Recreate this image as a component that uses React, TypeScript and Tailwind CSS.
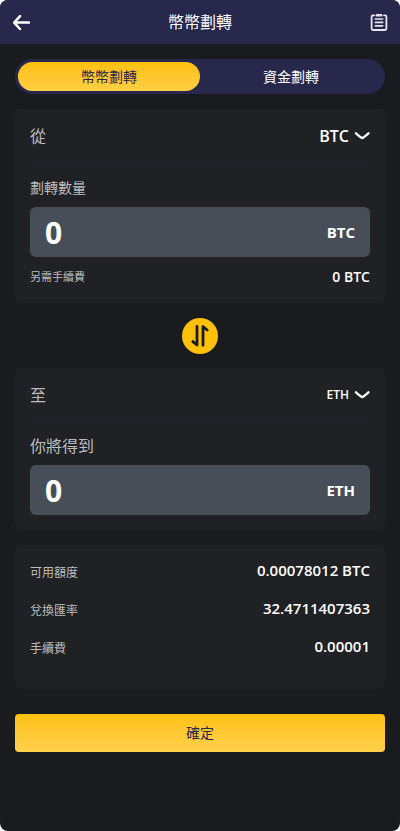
import React, { useState } from "react";

const coins = ["BTC", "ETH"];

const summary = [
  { label: "可用額度", value: "0.00078012 BTC" },
  { label: "兌換匯率", value: "32.4711407363" },
  { label: "手續費", value: "0.00001" },
];

function Header() {
  return (
    <header className="flex h-11 items-center justify-between bg-[#28274c] px-3 text-white">
      <a href="#back" aria-label="返回" className="flex w-5 justify-start">
        <svg viewBox="0 0 18 18" className="h-[18px] w-[18px]" fill="none" stroke="currentColor" strokeWidth="2.5" strokeLinecap="round" strokeLinejoin="round">
          <path d="M17 9.6H2.4M8 3.2L2.2 9.6L8 16" />
        </svg>
      </a>
      <h1 className="text-base leading-6">幣幣劃轉</h1>
      <a href="#records" aria-label="劃轉記錄" className="flex w-5 justify-end">
        <svg viewBox="0 0 18 18" className="h-[18px] w-[18px]" fill="none" stroke="#e6e6ee" strokeWidth="1.8" strokeLinecap="round" strokeLinejoin="round">
          <path d="M4 2.4H2.8Q1.6 2.4 1.6 3.8V15.5Q1.6 17 3 17H15Q16.4 17 16.4 15.5V3.8Q16.4 2.4 15.2 2.4H14" />
          <path d="M6.8 2.2H11.2" strokeWidth="2.4" />
          <path d="M5.4 6H12.6M5.4 9.4H12.6M5.4 12.8H12.6" strokeWidth="1.7" />
        </svg>
      </a>
    </header>
  );
}

function Tabs() {
  return (
    <nav className="flex rounded-full bg-[#28274c] p-[3px] text-sm leading-5">
      <button className="h-[29px] flex-1 rounded-full bg-linear-to-b from-[#ffc10a] to-[#ffce41] text-[#28274c]">
        幣幣劃轉
      </button>
      <button className="h-[29px] flex-1 rounded-full text-white">資金劃轉</button>
    </nav>
  );
}

type CoinSelectProps = {
  id: string;
  value: string;
  onChange: (coin: string) => void;
  className: string;
};

function CoinSelect({ id, value, onChange, className }: CoinSelectProps) {
  return (
    <div className="relative flex items-center">
      <select
        id={id}
        value={value}
        onChange={(e) => onChange(e.target.value)}
        className={`field-sizing-content appearance-none bg-transparent pr-[21px] font-semibold text-white outline-none ${className}`}
      >
        {coins.map((coin) => (
          <option key={coin} className="bg-[#202125]">
            {coin}
          </option>
        ))}
      </select>
      <svg viewBox="0 0 16 10" className="pointer-events-none absolute right-0 h-[10px] w-4" fill="none" stroke="#fff" strokeWidth="2.4" strokeLinecap="round" strokeLinejoin="round">
        <path d="M2 2.3Q7.2 7 8.2 7Q9.2 7 14.4 2.3" />
      </svg>
    </div>
  );
}

type AmountInputProps = {
  id: string;
  coin: string;
  value: string;
  onChange: (value: string) => void;
};

function AmountInput({ id, coin, value, onChange }: AmountInputProps) {
  return (
    <div className="flex h-[50px] items-center rounded-md bg-[#484e57] px-[15px] font-bold text-white">
      <input
        id={id}
        value={value}
        inputMode="decimal"
        onChange={(e) => onChange(e.target.value)}
        className="h-11 min-w-0 flex-1 bg-transparent pt-px text-[30px] leading-10 outline-none"
      />
      <span className="text-[15px] leading-5">{coin}</span>
    </div>
  );
}

function App() {
  const [from, setFrom] = useState("BTC");
  const [to, setTo] = useState("ETH");
  const [amount, setAmount] = useState("0");
  const [received, setReceived] = useState("0");

  const swap = () => {
    setFrom(to);
    setTo(from);
  };

  return (
    <div className="bg-white font-['Open_Sans','Noto_Sans_CJK_TC',sans-serif]">
      <div className="min-h-screen overflow-hidden rounded-lg bg-[#1a1b1f] text-[#bcbcbe]">
        <Header />
        <main className="flex flex-col p-[15px]">
          <Tabs />

          <section className="mt-[15px] rounded-[5px] bg-[#202125] px-[15px] pt-[15px] pb-4">
            <div className="flex h-[38px] items-start justify-between">
              <label htmlFor="from" className="text-base leading-6">從</label>
              <CoinSelect id="from" value={from} onChange={setFrom} className="text-base leading-6" />
            </div>
            <hr className="border-[#242438]" />
            <label htmlFor="amount" className="mt-[15px] mb-[9px] block text-sm leading-5">劃轉數量</label>
            <AmountInput id="amount" coin={from} value={amount} onChange={setAmount} />
            <div className="mt-[10px] flex items-center justify-between">
              <span className="text-[11px] leading-5">另需手續費</span>
              <span className="text-sm leading-5 font-semibold text-white">0 BTC</span>
            </div>
          </section>

          <button
            onClick={swap}
            aria-label="交換幣種"
            className="mt-[15px] mb-[14px] flex h-9 w-9 items-center justify-center self-center rounded-full bg-[#ffc107]"
          >
            <svg viewBox="0 0 36 36" className="h-9 w-9" fill="none" stroke="#1a1b1f" strokeWidth="2.8" strokeLinecap="round" strokeLinejoin="round">
              <path d="M15 8.3V27L10.8 23.6" />
              <path d="M21 27.3V8.6L25.2 12" />
            </svg>
          </button>

          <section className="rounded-[5px] bg-[#202125] p-[15px]">
            <div className="flex h-[35px] items-start justify-between">
              <label htmlFor="to" className="text-base leading-6">至</label>
              <CoinSelect id="to" value={to} onChange={setTo} className="text-xs leading-6" />
            </div>
            <hr className="border-[#242438]" />
            <label htmlFor="received" className="mt-[15px] mb-[7px] block text-base leading-6">你將得到</label>
            <AmountInput id="received" coin={to} value={received} onChange={setReceived} />
          </section>

          <dl className="mt-[15px] rounded-[5px] bg-[#202125] p-[15px]">
            {summary.map((row) => (
              <div key={row.label} className="flex h-[38px] items-start justify-between">
                <dt className="pt-px text-xs leading-6">{row.label}</dt>
                <dd className="text-[15px] leading-5 font-semibold text-white">{row.value}</dd>
              </div>
            ))}
          </dl>

          <button className="mt-[25px] h-[38px] rounded-sm bg-linear-to-b from-[#ffc10a] to-[#ffd04a] text-sm text-[#28274c]">
            確定
          </button>
        </main>
      </div>
    </div>
  );
}

export default App;
